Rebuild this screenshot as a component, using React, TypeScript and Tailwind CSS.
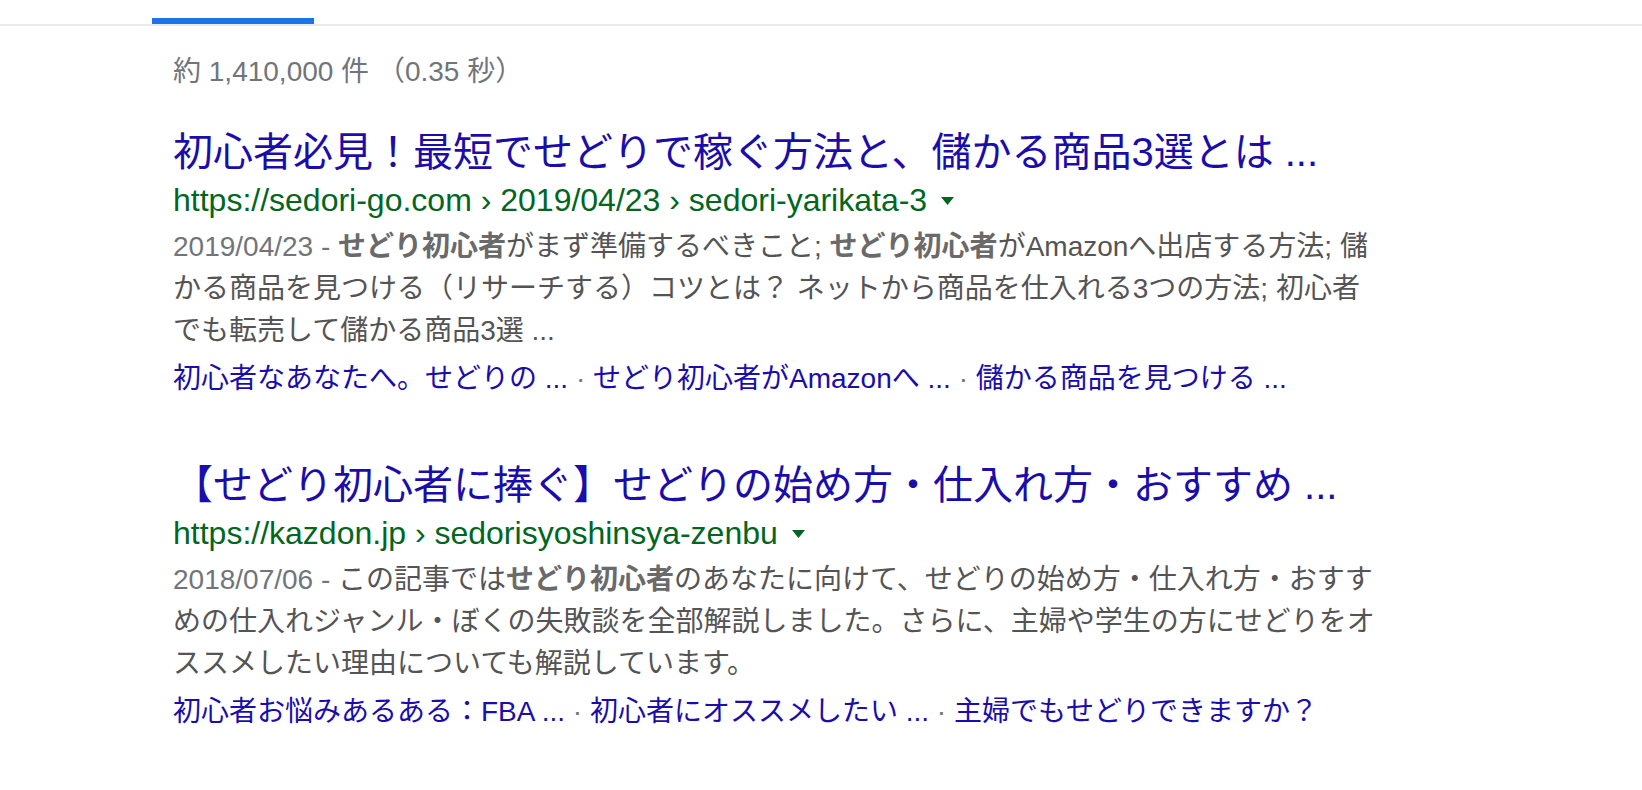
import React from "react";

type Result = {
  title: string;
  crumbs: string[];
  date: string;
  snippet: React.ReactNode;
  links: string[];
};

const results: Result[] = [
  {
    title: "初心者必見！最短でせどりで稼ぐ方法と、儲かる商品3選とは ...",
    crumbs: ["https://sedori-go.com", "2019/04/23", "sedori-yarikata-3"],
    date: "2019/04/23",
    snippet: (
      <>
        <b className="text-[#6a6a6a]">せどり初心者</b>がまず準備するべきこと; <b className="text-[#6a6a6a]">せどり初心者</b>
        がAmazonへ出店する方法; 儲かる商品を見つける（リサーチする）コツとは？
        ネットから商品を仕入れる3つの方法; 初心者でも転売して儲かる商品3選 ...
      </>
    ),
    links: ["初心者なあなたへ。せどりの ...", "せどり初心者がAmazonへ ...", "儲かる商品を見つける ..."],
  },
  {
    title: "【せどり初心者に捧ぐ】せどりの始め方・仕入れ方・おすすめ ...",
    crumbs: ["https://kazdon.jp", "sedorisyoshinsya-zenbu"],
    date: "2018/07/06",
    snippet: (
      <>
        この記事では<b className="text-[#6a6a6a]">せどり初心者</b>
        のあなたに向けて、せどりの始め方・仕入れ方・おすすめの仕入れジャンル・ぼくの失敗談を全部解説しました。さらに、主婦や学生の方にせどりをオススメしたい理由についても解説しています。
      </>
    ),
    links: ["初心者お悩みあるある：FBA ...", "初心者にオススメしたい ...", "主婦でもせどりできますか？"],
  },
];

function DownArrow() {
  return (
    <svg width="13" height="8" viewBox="0 0 13 8" className="ml-[14px] mt-[2px]">
      <path d="M0 0h13L6.5 8z" fill="#006621" />
    </svg>
  );
}

function SearchResult({ r }: { r: Result }) {
  return (
    <div>
      <h3 className="text-[40px] leading-[48px] text-[#1a0dab]">{r.title}</h3>
      <div className="flex items-center text-[32px] leading-[48px] text-[#006621]">
        <span>{r.crumbs.join(" › ")}</span>
        <DownArrow />
      </div>
      <div className="mt-[2px] w-[1208px] text-[28px] leading-[42px] text-[#545454]">
        <span className="text-[#70757a]">{r.date} - </span>
        {r.snippet}
      </div>
      <div className="mt-[6px] text-[28px] leading-[42px] text-[#1a0dab]">
        {r.links.map((l, i) => (
          <React.Fragment key={l}>
            {i > 0 && <span className="text-[#70757a]"> · </span>}
            <span>{l}</span>
          </React.Fragment>
        ))}
      </div>
    </div>
  );
}

export default function App() {
  return (
    <div className="min-h-screen bg-white font-['Liberation_Sans','Noto_Sans_CJK_JP',sans-serif] [text-spacing-trim:space-all]">
      <div className="border-b-2 border-[#ebebeb] pt-[18px]">
        <div className="ml-[152px] h-[6px] w-[162px] bg-[#1a73e8]" />
      </div>
      <div className="pl-[173px] pt-[26px]">
        <div className="text-[28px] leading-[40px] text-[#70757a]">約 1,410,000 件 （0.35 秒）</div>
        <div className="mt-[36px] flex flex-col gap-[61px]">
          {results.map((r) => (
            <SearchResult key={r.title} r={r} />
          ))}
        </div>
      </div>
    </div>
  );
}
